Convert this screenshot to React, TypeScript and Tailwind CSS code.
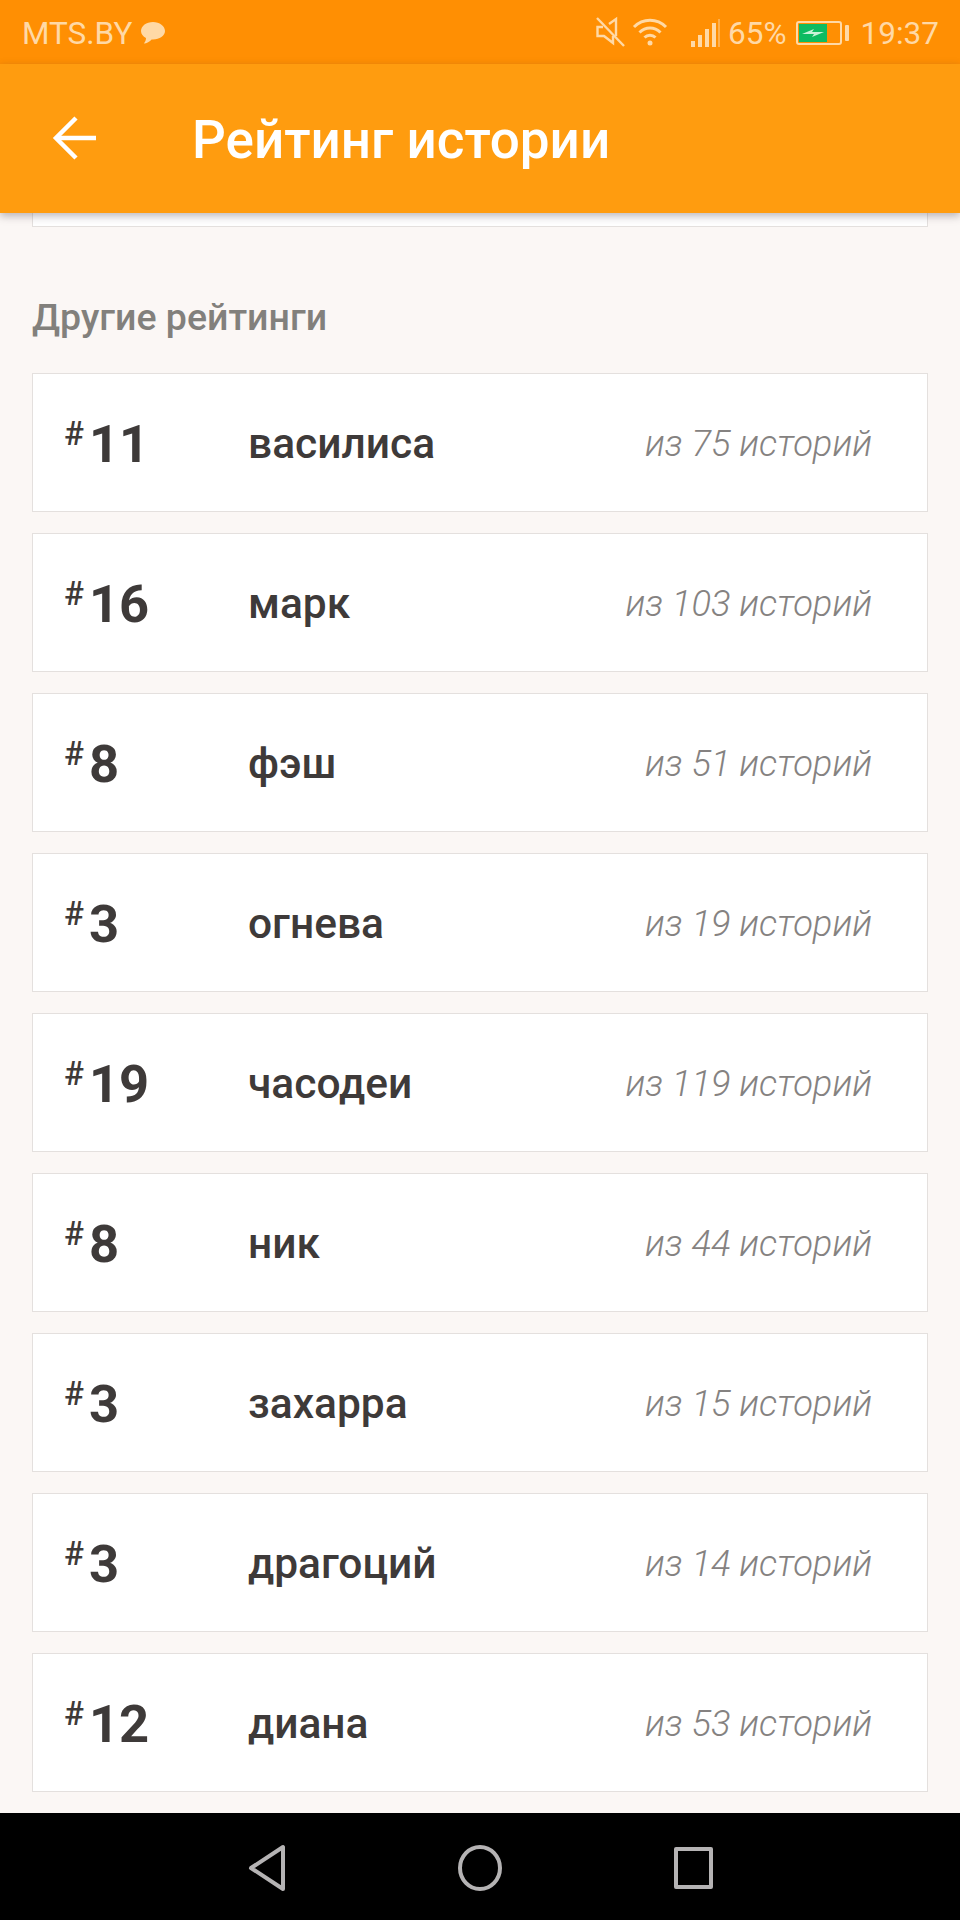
const rows = [
  { rank: "11", name: "василиса", total: "из 75 историй" },
  { rank: "16", name: "марк", total: "из 103 историй" },
  { rank: "8", name: "фэш", total: "из 51 историй" },
  { rank: "3", name: "огнева", total: "из 19 историй" },
  { rank: "19", name: "часодеи", total: "из 119 историй" },
  { rank: "8", name: "ник", total: "из 44 историй" },
  { rank: "3", name: "захарра", total: "из 15 историй" },
  { rank: "3", name: "драгоций", total: "из 14 историй" },
  { rank: "12", name: "диана", total: "из 53 историй" },
];

function StatusBar() {
  return (
    <div className="h-[64px] shrink-0 bg-[#ff8f03] flex items-center justify-between pl-[22px] pr-[21px] text-[#ffd9a6] text-[31.5px]">
      <div className="flex items-center gap-[8px]">
        <span className="mt-[3px]">MTS.BY</span>
        <svg width="26" height="24" viewBox="0 0 26 24" fill="#ffd9a6" className="mt-[2px]">
          <path d="M13 1C6.400 1 1 4.900 1 10c0 3 2 5.500 5 7 0 2-.8 4-2.200 5.600 3-.4 6-1.800 7.800-4.200.5 0 .9.100 1.400.100 6.600 0 12-3.800 12-8.500S19.600 1 13 1z" />
        </svg>
      </div>
      <div className="flex items-center">
        <svg width="30" height="32" viewBox="0 0 30 32" fill="none" stroke="#ffd9a6" strokeWidth="2.400" className="mr-[7px]">
          <path d="M2 2l27 28" />
          <path d="M8 11H2.500v9H9l9 7v-7M14 8l7-5v17" />
        </svg>
        <svg width="36" height="30" viewBox="0 0 36 30" fill="none" stroke="#ffd9a6" strokeWidth="3" className="mr-[23px]">
          <path d="M2 10c9-9 23-9 32 0" />
          <path d="M7.500 15.500c6-6 15-6 21 0" />
          <path d="M12.500 20.500c3-3 8-3 11 0" />
          <circle cx="18" cy="26" r="2.500" fill="#ffd9a6" stroke="none" />
        </svg>
        <div className="flex items-end gap-[3px] h-[28px] mr-[2px] mt-[2px]">
          <div className="w-[4px] h-[6px] bg-[#ffd9a6]" />
          <div className="w-[4px] h-[12px] bg-[#ffd9a6]" />
          <div className="w-[4px] h-[18px] bg-[#ffd9a6]" />
          <div className="w-[4px] h-[24px] bg-[#ffd9a6]" />
        </div>
        <div className="w-[2px] h-[28px] bg-[#ffb04d] mr-[8px] mt-[2px]" />
        <span className="mr-[9px] mt-[3px]">65%</span>
        <div className="w-[46px] h-[24px] border-2 border-[#ffd9a6] rounded-[3px] p-[1px] mr-[3px] mt-[2px]">
          <div className="w-[28px] h-full bg-[#0dbb62] flex items-center justify-center">
            <svg width="24" height="12" viewBox="0 0 22 12" fill="#c8f2d8">
              <path d="M0 7l12-5-2 3h12L10 10l2-3z" />
            </svg>
          </div>
        </div>
        <div className="w-[4px] h-[16px] bg-[#ffd9a6] rounded-[1px] mr-[12px] mt-[2px]" />
        <span className="mt-[3px]">19:37</span>
      </div>
    </div>
  );
}

function Toolbar() {
  return (
    <div className="h-[149px] shrink-0 bg-[#ff9c0f] flex items-center pl-[52px] text-white relative z-10 shadow-[0_3px_8px_rgba(60,50,60,0.35)]">
      <svg width="44" height="44" viewBox="0 0 44 44" fill="none" stroke="white" strokeWidth="4.500" className="-mt-[1px]">
        <path d="M44 22H4" />
        <path d="M24 2L4 22l20 20" />
      </svg>
      <h1 className="ml-[96px] mt-[3px] text-[53px] font-medium leading-none">Рейтинг истории</h1>
    </div>
  );
}

function Row({ rank, name, total }: { rank: string; name: string; total: string }) {
  return (
    <div className="h-[139px] bg-white border border-[#e4e0de] flex items-center pl-[31px] pr-[55px] text-[#3e3a39]">
      <div className="w-[184px] flex items-start mt-[3px]">
        <span className="text-[33px] font-medium leading-none mt-[-1px] mr-[5px]">#</span>
        <span className="text-[52.500px] font-bold leading-none">{rank}</span>
      </div>
      <div className="flex-1 text-[42.500px] font-medium leading-none mt-[3px]">{name}</div>
      <div className="text-[36.300px] font-light italic text-[#858281] leading-none mt-[3px]">{total}</div>
    </div>
  );
}

function NavBar() {
  return (
    <div className="h-[107px] shrink-0 bg-black flex items-start justify-center pt-[31px]">
      <div className="flex items-center gap-[172px]">
        <svg width="38" height="48" viewBox="0 0 38 48" fill="none" stroke="#b5b3b4" strokeWidth="4" strokeLinejoin="round">
          <path d="M35 3v42L3 24z" />
        </svg>
        <svg width="44" height="46" viewBox="0 0 44 46" fill="none" stroke="#b5b3b4" strokeWidth="4">
          <ellipse cx="22" cy="23" rx="20" ry="21" />
        </svg>
        <div className="w-[39px] h-[42px] border-[4px] border-[#b5b3b4] rounded-[2px]" />
      </div>
    </div>
  );
}

export default function App() {
  return (
    <div className="w-[960px] h-[1920px] flex flex-col overflow-hidden bg-[#fbf7f5] font-['Roboto',sans-serif]">
      <StatusBar />
      <Toolbar />
      <div className="flex-1 overflow-hidden px-[32px]">
        <div className="h-[14px] bg-white border border-t-0 border-[#e4e0de]" />
        <h2 className="mt-[70px] mb-[35px] text-[37.500px] font-medium leading-[41px] text-[#82807c]">Другие рейтинги</h2>
        <div className="flex flex-col gap-[21px]">
          {rows.map((r) => (
            <Row key={r.name} rank={r.rank} name={r.name} total={r.total} />
          ))}
        </div>
      </div>
      <NavBar />
    </div>
  );
}
